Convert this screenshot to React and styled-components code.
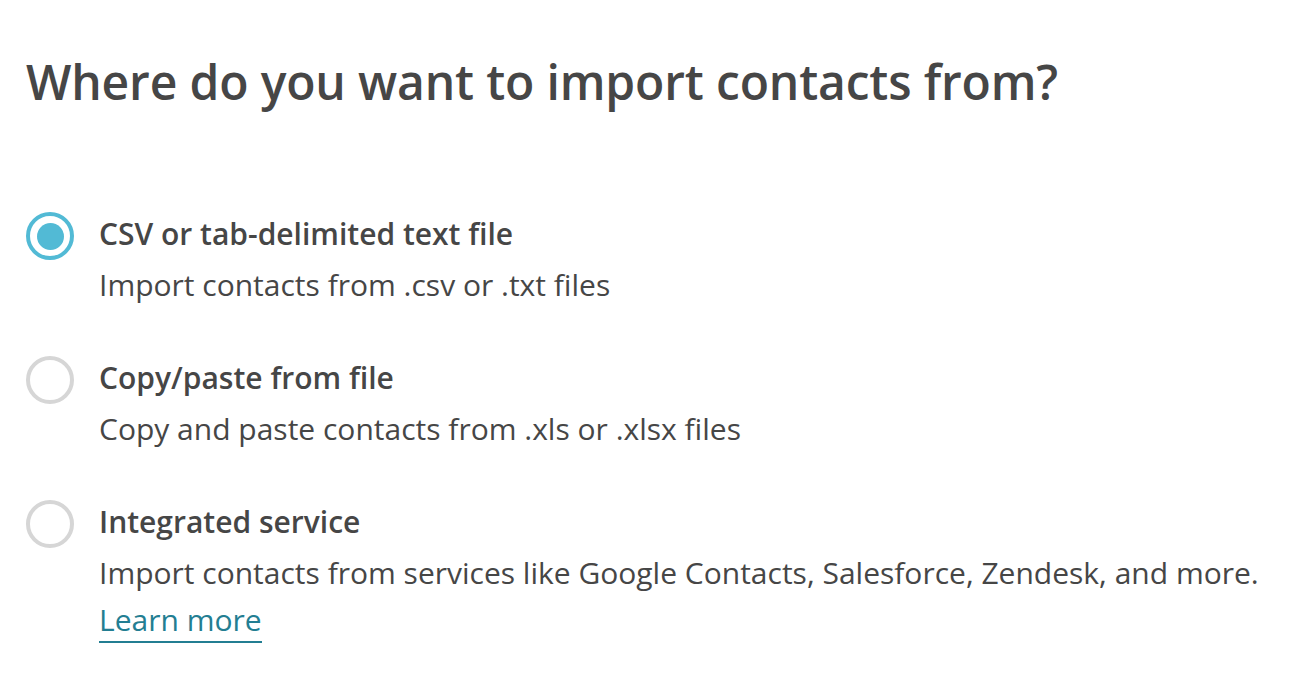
import React, { useState } from "react";
import styled, { createGlobalStyle } from "styled-components";

const GlobalStyle = createGlobalStyle`
  html, body {
    margin: 0;
    padding: 0;
    background: #ffffff;
  }
  body {
    font-family: "Open Sans", "Noto Sans", sans-serif;
    color: #464646;
  }
`;

const Page = styled.div`
  padding: 50px 26px 0 26px;
`;

const Heading = styled.h1`
  margin: 0 0 93px 0;
  font-size: 48px;
  font-weight: 600;
  line-height: 64px;
  letter-spacing: -0.15px;
  color: #464646;
`;

const OptionList = styled.ul`
  list-style: none;
  margin: 0;
  padding: 0;
  display: flex;
  flex-direction: column;
  gap: 40px;
`;

const Option = styled.li`
  display: flex;
  align-items: flex-start;
  gap: 25px;
  cursor: pointer;
`;

const Radio = styled.span`
  flex-shrink: 0;
  box-sizing: border-box;
  width: 48px;
  height: 48px;
  margin-top: 5px;
  border-radius: 50%;
  border: 4px solid ${({ $checked }) => ($checked ? "#52bad5" : "#d6d6d6")};
  display: flex;
  align-items: center;
  justify-content: center;
  &::after {
    content: "";
    width: 27px;
    height: 27px;
    border-radius: 50%;
    background: #52bad5;
    display: ${({ $checked }) => ($checked ? "block" : "none")};
  }
`;

const OptionText = styled.div`
  display: flex;
  flex-direction: column;
`;

const OptionTitle = styled.span`
  font-size: 30px;
  font-weight: 600;
  line-height: 53px;
  color: #464646;
`;

const OptionDesc = styled.span`
  margin-top: -2px;
  font-size: 30px;
  font-weight: 400;
  line-height: 53px;
  color: #464646;
`;

const LearnMore = styled.a`
  align-self: flex-start;
  font-size: 30px;
  line-height: 42px;
  color: #237e92;
  text-decoration: none;
  border-bottom: 2px solid #237e92;
`;

const options = [
  {
    id: "csv",
    title: "CSV or tab-delimited text file",
    desc: "Import contacts from .csv or .txt files",
  },
  {
    id: "paste",
    title: "Copy/paste from file",
    desc: "Copy and paste contacts from .xls or .xlsx files",
  },
  {
    id: "service",
    title: "Integrated service",
    desc: "Import contacts from services like Google Contacts, Salesforce, Zendesk, and more.",
    link: "Learn more",
  },
];

export default function App() {
  const [selected, setSelected] = useState("csv");
  return (
    <>
      <GlobalStyle />
      <Page>
        <Heading>Where do you want to import contacts from?</Heading>
        <OptionList>
          {options.map((o) => (
            <Option key={o.id} onClick={() => setSelected(o.id)}>
              <Radio $checked={selected === o.id} />
              <OptionText>
                <OptionTitle>{o.title}</OptionTitle>
                <OptionDesc>{o.desc}</OptionDesc>
                {o.link && <LearnMore href="#">{o.link}</LearnMore>}
              </OptionText>
            </Option>
          ))}
        </OptionList>
      </Page>
    </>
  );
}
